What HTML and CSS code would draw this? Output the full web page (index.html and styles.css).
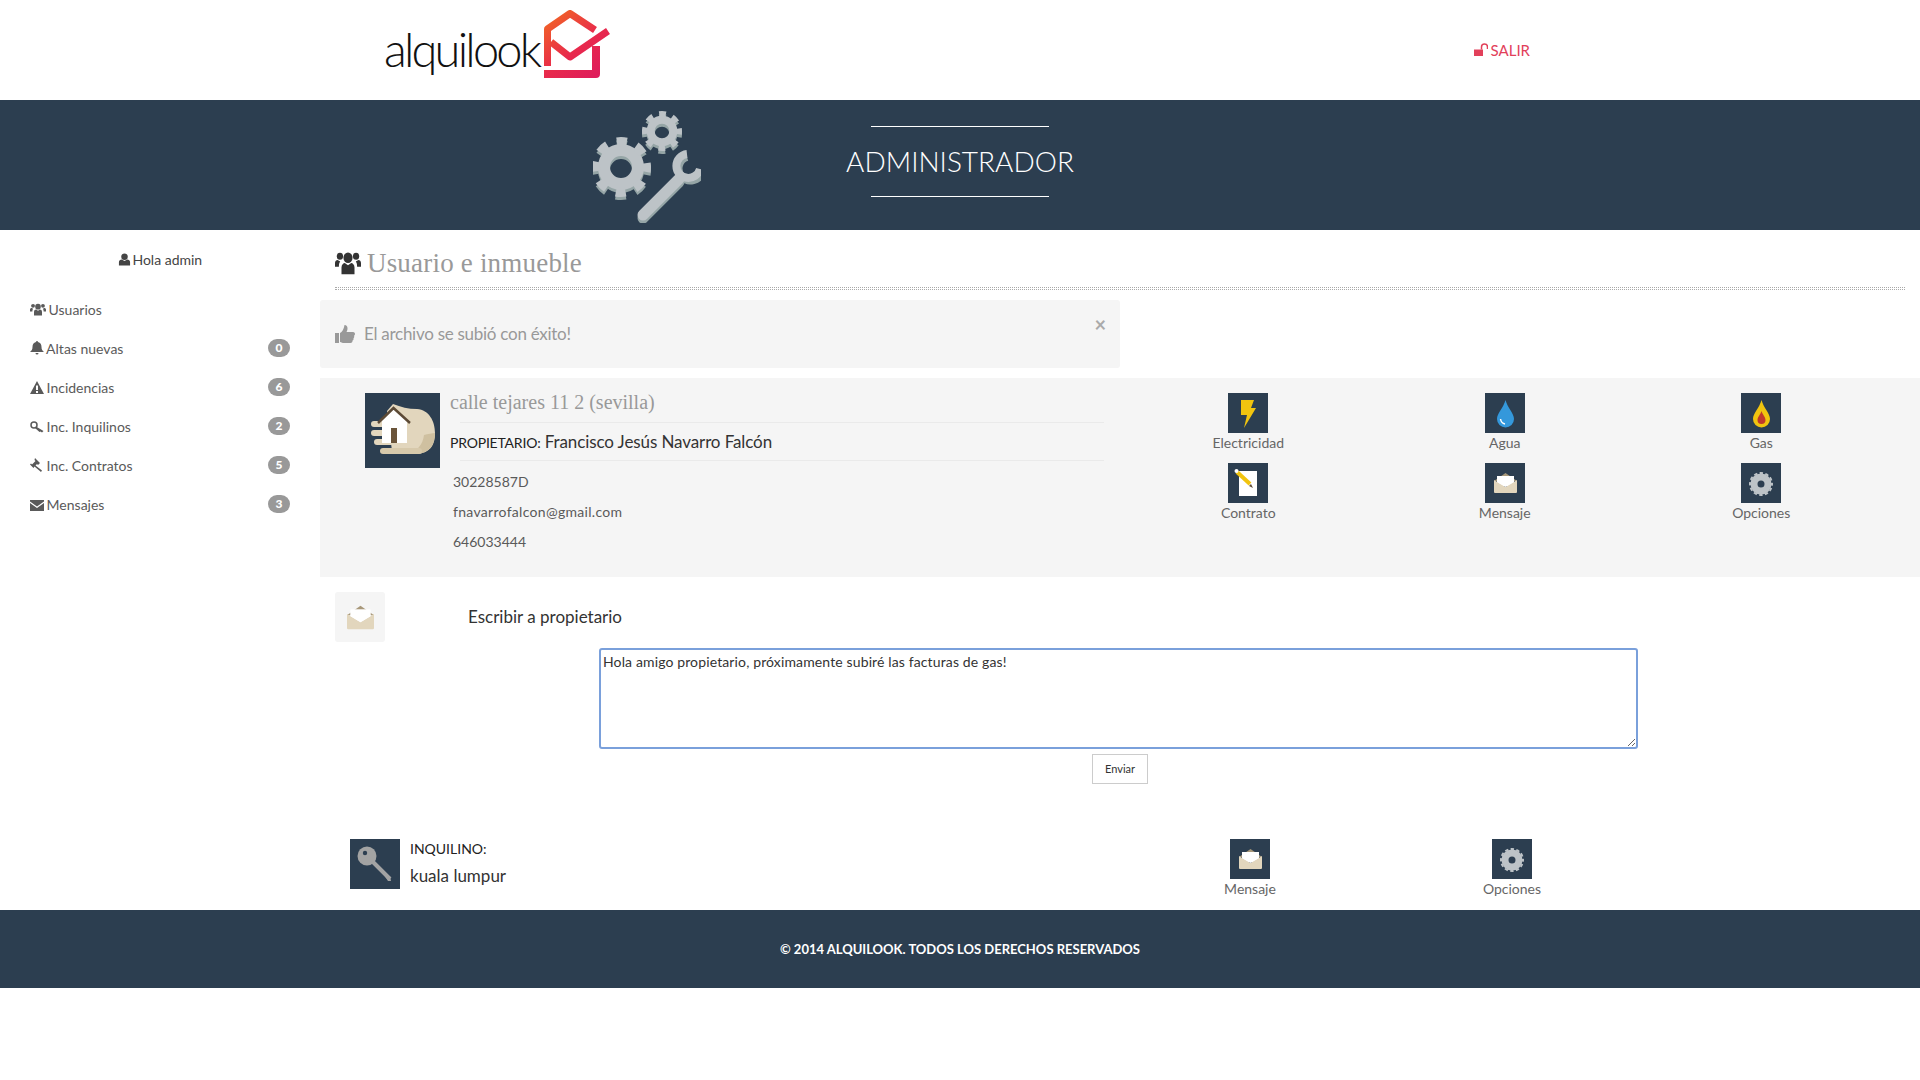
FILE: index.html
```html
<!DOCTYPE html>
<html lang="es">
<head>
<meta charset="UTF-8">
<meta name="viewport" content="width=device-width, initial-scale=1.0">
<title>Alquilook - Administrador</title>
<link rel="stylesheet" href="styles.css">
</head>
<body>

<!-- iconos compartidos -->
<svg class="sprite" width="0" height="0">
    <defs>
        <linearGradient id="logoGrad" gradientUnits="userSpaceOnUse" x1="4" y1="0" x2="60" y2="68">
            <stop offset="0" stop-color="#f26a21"/>
            <stop offset="0.55" stop-color="#e8294c"/>
            <stop offset="1" stop-color="#dd1a5e"/>
        </linearGradient>
        <symbol id="i-gear" viewBox="0 0 60 60">
            <circle cx="30" cy="30" r="17" fill="none" stroke="currentColor" stroke-width="12"/>
            <circle cx="30" cy="30" r="25.500" fill="none" stroke="currentColor" stroke-width="9" stroke-dasharray="10 10.030" stroke-dashoffset="5"/>
        </symbol>
        <symbol id="i-gear-small" viewBox="0 0 24 24">
            <circle cx="12" cy="12" r="7" fill="none" stroke="currentColor" stroke-width="7"/>
            <circle cx="12" cy="12" r="11" fill="none" stroke="currentColor" stroke-width="2" stroke-dasharray="3.400 2.360" stroke-dashoffset="1.700"/>
        </symbol>
        <symbol id="i-envelope" viewBox="0 0 23 20">
            <path fill="#a8987a" d="M11.500 0L23 8H0z"/>
            <path fill="#fff" d="M3 3h17v10H3z"/>
            <path fill="#e2d6bd" d="M0 7l11.500 7L23 7v12a1 1 0 0 1-1 1H1a1 1 0 0 1-1-1z"/>
            <path fill="#fff" d="M3 4h17v5l-8.500 5L3 9z"/>
        </symbol>
        <symbol id="i-user" viewBox="0 0 14 14">
            <circle cx="7" cy="4" r="3.500"/>
            <path d="M1 13.500V10c0-2 1.500-3 3-3l3 1.500L10 7c1.500 0 3 1 3 3v3.500z"/>
        </symbol>
        <symbol id="i-users" viewBox="0 0 20 16" preserveAspectRatio="none">
            <circle cx="10" cy="4.500" r="3.500"/>
            <circle cx="3.800" cy="3.500" r="2.400"/>
            <circle cx="16.200" cy="3.500" r="2.400"/>
            <path d="M5 15.500V11c0-2 1.500-3 2.500-3L10 9.500 12.500 8c1 0 2.500 1 2.500 3v4.500z"/>
            <path d="M0 10.500V8c0-1.300 1-2 2-2l2 1c-.7.800-1 1.500-1 3.500zM20 10.500V8c0-1.300-1-2-2-2l-2 1c.7.800 1 1.500 1 3.500z"/>
        </symbol>
    </defs>
</svg>

<header class="topbar">
    <a class="logo" href="#">
        <span class="logo-text">alquilook</span>
        <svg class="logo-mark" viewBox="0 0 66 70" width="66" height="70">
            <g fill="none" stroke="url(#logoGrad)" stroke-width="7" stroke-linejoin="round">
                <path d="M3.500 56V19L26 3.500 51 20"/>
                <path d="M7 32l19 15 38-26"/>
                <path d="M52 36v28H0" stroke-width="8"/>
            </g>
        </svg>
    </a>
    <a class="logout" href="#">
        <svg class="fa" viewBox="0 0 14 14" width="14" height="14"><path d="M0 6.500h9V13H0z"/><path d="M7.500 6.500V4a3 3 0 0 1 6 0v2" fill="none" stroke="currentColor" stroke-width="1.500"/></svg>
        SALIR
    </a>
</header>

<section class="band">
    <svg class="band-icon" viewBox="0 0 108 114" width="108" height="114">
        <g color="#95a5a6" transform="translate(0 3)">
            <use href="#i-gear" x="-2" y="28" width="60" height="60"/>
            <use href="#i-gear" x="49" y="2" width="40" height="40"/>
        </g>
        <g color="#bdc3c7">
            <use href="#i-gear" x="-2" y="28" width="60" height="60"/>
            <use href="#i-gear" x="49" y="2" width="40" height="40"/>
        </g>
        <g fill="none" stroke-linecap="round">
            <g stroke="#95a5a6" transform="translate(0 3)">
                <path d="M50 106L86 70" stroke-width="11"/>
                <path d="M94 45A12 12 0 1 0 109 60" stroke-width="8" stroke-linecap="butt"/>
            </g>
            <g stroke="#bdc3c7">
                <path d="M50 106L86 70" stroke-width="11"/>
                <path d="M94 45A12 12 0 1 0 107 60" stroke-width="8" stroke-linecap="butt"/>
            </g>
        </g>
    </svg>
    <h2 class="band-title"><span>ADMINISTRADOR</span></h2>
</section>

<div class="layout">
    <aside class="sidebar">
        <p class="hello"><svg class="fa" width="13" height="13"><use href="#i-user"/></svg> Hola admin</p>
        <ul class="side-menu">
            <li><a href="#"><svg class="fa" width="16" height="13"><use href="#i-users"/></svg> Usuarios</a></li>
            <li>
                <a href="#"><svg class="fa" viewBox="0 0 14 14" width="14" height="14"><path d="M7 0a1 1 0 0 1 1 1c2.500.500 3.500 2.500 3.500 5 0 2.500 1 3.500 2.500 5H0c1.500-1.500 2.500-2.500 2.500-5 0-2.500 1-4.500 3.500-5a1 1 0 0 1 1-1zM5.500 12h3a1.500 1.500 0 0 1-3 0z"/></svg> Altas nuevas</a>
                <span class="badge">0</span>
            </li>
            <li>
                <a href="#"><svg class="fa" viewBox="0 0 14 13" width="14" height="13"><path fill-rule="evenodd" d="M7 0l7 13H0zM6 4.500V9h2V4.500zM6 10v2h2v-2z"/></svg> Incidencias</a>
                <span class="badge">6</span>
            </li>
            <li>
                <a href="#"><svg class="fa" viewBox="0 0 14 12" width="14" height="12"><circle cx="4" cy="4" r="3" fill="none" stroke="currentColor" stroke-width="1.500"/><path d="M6 5.500L13.500 10 12 11.500 10.500 10.500 9.500 11 5 7z"/></svg> Inc. Inquilinos</a>
                <span class="badge">2</span>
            </li>
            <li>
                <a href="#"><svg class="fa" viewBox="0 0 14 14" width="14" height="14"><path d="M5 0l5 5-2 2-1-1-1.500 1.500 6.500 5-1 1.500-6.500-5.500L3.500 10l-1-1L0 6.500 1 5.500l1 1L5.500 3 4.500 2z"/></svg> Inc. Contratos</a>
                <span class="badge">5</span>
            </li>
            <li>
                <a href="#"><svg class="fa" viewBox="0 0 14 11" width="14" height="11"><path d="M0 0h14v1.500L7 6.500 0 1.500z"/><path d="M0 3l7 5 7-5v8H0z"/></svg> Mensajes</a>
                <span class="badge">3</span>
            </li>
        </ul>
    </aside>

    <main class="content">
        <h1 class="page-title"><svg class="fa" width="26" height="24"><use href="#i-users"/></svg> Usuario e inmueble</h1>
        <div class="dots"></div>

        <div class="alert">
            <svg class="fa" viewBox="0 0 20 20" width="20" height="20"><path d="M0 9h4v10H0z"/><path d="M5 9c2-1 4-4 4.500-8 2 0 3 1.500 3 3.500 0 1.500-.5 2.500-1 3.500H18c1.500 0 2 1 2 2 0 .800-.5 1.500-1 1.800.500 1 .200 2-.500 2.500.300 1-.200 2-1 2.300.200 1.400-.700 2.400-2 2.400H9c-1.500 0-2.500-.500-4-1z"/></svg>
            <span class="alert-text">El archivo se subió con éxito!</span>
            <button class="close">×</button>
        </div>

        <section class="panel">
            <div class="owner">
                <svg class="owner-pic" viewBox="0 0 75 75" width="75" height="75">
                    <rect width="75" height="75" fill="#2c3e50"/>
                    <path fill="#e2d6bd" d="M28 11c8 3 15 5 24 5 12 1 18 12 18 24s-5 20-18 21l-25-3-5-40z"/>
                    <path fill="#cfc0a0" d="M70 40c0 12-5 20-18 21H40c12-1 18-10 19-19 4-1 8-2 11-2z"/>
                    <rect x="6" y="28" width="24" height="6" rx="3" fill="#e2d6bd"/>
                    <rect x="6" y="37" width="24" height="6" rx="3" fill="#e2d6bd"/>
                    <rect x="9" y="46" width="24" height="6" rx="3" fill="#e2d6bd"/>
                    <rect x="15" y="55" width="42" height="6" rx="3" fill="#d7c9ab"/>
                    <path fill="#fff" d="M17 27L29 15l13 12v23H17z"/>
                    <path fill="none" stroke="#5c4a36" stroke-width="2.500" d="M13 30L28.500 15 45 30"/>
                    <rect x="26" y="35" width="6" height="15" fill="#6a543a"/>
                </svg>
                <div class="owner-info">
                    <h3 class="address">calle tejares 11 2 (sevilla)</h3>
                    <hr>
                    <p class="owner-name"><span>PROPIETARIO:</span> Francisco Jesús Navarro Falcón</p>
                    <hr>
                    <ul class="owner-data">
                        <li>30228587D</li>
                        <li class="owner-mail">fnavarrofalcon@gmail.com</li>
                        <li>646033444</li>
                    </ul>
                </div>
            </div>
            <div class="tiles">
                <a class="tile" href="#">
                    <svg viewBox="0 0 40 40" width="40" height="40"><rect width="40" height="40" fill="#2c3e50"/><path fill="#f1c40f" d="M13 7h13l-3 8h5L16 35l3-13h-6z"/></svg>
                    Electricidad
                </a>
                <a class="tile" href="#">
                    <svg viewBox="0 0 40 40" width="40" height="40"><rect width="40" height="40" fill="#2c3e50"/><path fill="#3498db" d="M20.500 7c2 8 8.500 13 8.500 19a8.500 8.500 0 0 1-17 0c0-6 6.500-11 8.500-19z"/><path fill="none" stroke="#fff" stroke-width="1.500" d="M15.500 26c.5 3 2 4.500 4.500 5"/></svg>
                    Agua
                </a>
                <a class="tile" href="#">
                    <svg viewBox="0 0 40 40" width="40" height="40"><rect width="40" height="40" fill="#2c3e50"/><path fill="#f1c40f" d="M20.500 7c2 8 8.500 13 8.500 19a8.500 8.500 0 0 1-17 0c0-6 6.500-11 8.500-19z"/><path fill="#c0392b" d="M20.500 18c1 3.500 4 6 4 9a4 4 0 0 1-8 0c0-3 3-5.500 4-9z"/></svg>
                    Gas
                </a>
                <a class="tile" href="#">
                    <svg viewBox="0 0 40 40" width="40" height="40"><rect width="40" height="40" fill="#2c3e50"/><path fill="#fff" d="M11 8h18v25H11z"/><path stroke="#f1c40f" stroke-width="4" d="M9 9l13 12"/><path fill="#5c4a36" d="M21 23l4 2-2-4z"/><circle cx="8.500" cy="8" r="2" fill="#fff"/></svg>
                    Contrato
                </a>
                <a class="tile" href="#">
                    <svg viewBox="0 0 40 40" width="40" height="40"><rect width="40" height="40" fill="#2c3e50"/><use href="#i-envelope" x="9" y="10" width="23" height="20"/></svg>
                    Mensaje
                </a>
                <a class="tile" href="#">
                    <svg viewBox="0 0 40 40" width="40" height="40" color="#bdc3c7"><rect width="40" height="40" fill="#2c3e50"/><use href="#i-gear-small" x="8" y="9" width="24" height="24"/></svg>
                    Opciones
                </a>
            </div>
        </section>

        <section class="message">
            <div class="message-head">
                <span class="message-icon"><svg width="27" height="25"><use href="#i-envelope"/></svg></span>
                <span class="message-title">Escribir a propietario</span>
            </div>
            <textarea class="message-box">Hola amigo propietario, próximamente subiré las facturas de gas!</textarea>
            <div class="message-send"><button class="btn">Enviar</button></div>
        </section>

        <section class="tenant">
            <div class="tenant-info">
                <svg viewBox="0 0 50 50" width="50" height="50"><rect width="50" height="50" fill="#2c3e50"/><path fill="none" stroke="#a3a3a3" stroke-width="4" d="M20 20l20 20"/><path fill="#a3a3a3" d="M34 36l3-1 1 3 2-1 1 5-3 0z"/><circle cx="17" cy="17" r="9.500" fill="#a3a3a3"/><circle cx="15" cy="14" r="2.200" fill="#2c3e50"/></svg>
                <div>
                    <p class="tenant-label">INQUILINO:</p>
                    <p class="tenant-name">kuala lumpur</p>
                </div>
            </div>
            <a class="tile" href="#">
                <svg viewBox="0 0 40 40" width="40" height="40"><rect width="40" height="40" fill="#2c3e50"/><use href="#i-envelope" x="9" y="10" width="23" height="20"/></svg>
                Mensaje
            </a>
            <a class="tile" href="#">
                <svg viewBox="0 0 40 40" width="40" height="40" color="#bdc3c7"><rect width="40" height="40" fill="#2c3e50"/><use href="#i-gear-small" x="8" y="9" width="24" height="24"/></svg>
                Opciones
            </a>
        </section>
    </main>
</div>

<footer class="footer">© 2014 ALQUILOOK. TODOS LOS DERECHOS RESERVADOS</footer>

</body>
</html>
```

FILE: styles.css
```css
body {
  font-family: 'Lato', sans-serif;
  font-size: 14px;
  margin: 0;
  background-color: #fff;
  color: #5a5a5a;
}
a {
  color: inherit;
  text-decoration: none;
}
ul {
  list-style: none;
  margin: 0;
  padding: 0;
}
p, h1, h2, h3 {
  margin: 0;
  font-weight: normal;
}
.sprite {
  display: block;
  height: 0;
}
.fa {
  fill: currentColor;
  vertical-align: -1px;
  margin-right: -1px;
}

/* cabecera */
.topbar {
  display: flex;
  align-items: flex-start;
  justify-content: space-between;
  height: 100px;
  padding: 0 390px 0 384px;
}
.logo {
  display: flex;
  align-items: flex-start;
  color: #111;
  padding-top: 10px;
}
.logo-text {
  font-size: 47px;
  font-weight: 300;
  line-height: 78px;
  letter-spacing: -2.800px;
  width: 160px;
}
.logo-mark {
  display: block;
}
.logout {
  margin-top: 41px;
  color: #e2405a;
  font-size: 15px;
  line-height: 18px;
}
.band {
  display: grid;
  grid-template-columns: 1fr auto 1fr;
  align-items: center;
  height: 130px;
  background-color: #2c3e50;
  color: #fff;
}
.band-icon {
  justify-self: end;
  margin: 2px 145px 0 0;
}
.band-title {
  margin-bottom: 8px;
  font-size: 28px;
  font-weight: 300;
  line-height: 34px;
  text-align: center;
}
.band-title span {
  display: block;
  position: relative;
  padding: 18px 0 19px;
}
.band-title span::before,
.band-title span::after {
  content: '';
  position: absolute;
  left: 25px;
  right: 25px;
  height: 1px;
  background-color: #fff;
}
.band-title span::before { top: 0; }
.band-title span::after { bottom: 0; }

/* columnas */
.layout {
  display: grid;
  grid-template-columns: 320px 1fr;
  height: 680px;
}
.sidebar {
  padding-top: 20px;
}
.hello {
  line-height: 20px;
  text-align: center;
  color: #444;
  margin-bottom: 20px;
}
.hello .fa {
  margin-right: -2px;
}
.side-menu li {
  display: flex;
  align-items: center;
  justify-content: space-between;
  height: 39px;
  padding: 0 30px;
}
.badge {
  width: 22px;
  height: 18px;
  line-height: 18px;
  margin-top: -2px;
  border-radius: 9px;
  background-color: #999;
  color: #fff;
  font-size: 12px;
  font-weight: 900;
  text-align: center;
}

/* contenido */
.page-title {
  padding: 16px 15px 0;
  height: 41px;
  font-family: 'Liberation Serif', serif;
  font-size: 27px;
  line-height: 34px;
  letter-spacing: 0.200px;
  color: #999;
}
.page-title .fa {
  color: #333;
  vertical-align: -3px;
}
.dots {
  height: 1px;
  margin: 0 15px;
  border-top: 1px dotted #aaa;
  border-bottom: 1px dotted #aaa;
}
.alert {
  display: flex;
  align-items: center;
  gap: 10px;
  width: 800px;
  height: 68px;
  box-sizing: border-box;
  margin-top: 10px;
  padding: 0 15px;
  border-radius: 3px;
  background-color: #f5f5f5;
  color: #999;
  font-size: 17px;
  letter-spacing: -0.270px;
}
.alert-text {
  margin-top: -2px;
}
.close {
  align-self: flex-start;
  margin: 13px -1px 0 auto;
  padding: 0;
  border: none;
  background: none;
  color: #aaa;
  font-family: 'Lato', sans-serif;
  font-size: 20px;
  font-weight: 700;
  line-height: 22px;
}
.panel {
  display: flex;
  height: 199px;
  margin-top: 10px;
  background-color: #f5f5f5;
}
.owner {
  display: flex;
  box-sizing: border-box;
  width: 800px;
  padding: 15px 16px 0 45px;
}
.owner-pic {
  flex: none;
}
.owner-info {
  flex: 1;
  margin-left: 10px;
}
.owner-info hr {
  height: 1px;
  margin: 0 0 0 10px;
  border: none;
  background-color: #eaeaea;
}
.address {
  height: 29px;
  font-family: 'Liberation Serif', serif;
  font-size: 20px;
  line-height: 18px;
  color: #999;
}
.owner-name {
  height: 37px;
  line-height: 37px;
  font-size: 17px;
  letter-spacing: -0.100px;
  color: #333;
}
.owner-name span {
  font-size: 14px;
  letter-spacing: -0.200px;
  color: #222;
}
.owner-data {
  margin: 6px 0 0 3px;
}
.owner-data li {
  height: 30px;
  line-height: 30px;
}
.owner-data .owner-mail {
  letter-spacing: 0.300px;
}
.tiles {
  display: grid;
  grid-template-columns: repeat(3, 256.500px);
  grid-auto-rows: 60px;
  row-gap: 10px;
  padding-top: 15px;
}
.tile {
  display: flex;
  flex-direction: column;
  align-items: center;
  color: #666;
  line-height: 20px;
}
.tile svg {
  display: block;
}
.message-head {
  display: flex;
  align-items: center;
  gap: 83px;
  margin: 15px 0 0 15px;
}
.message-icon {
  display: flex;
  align-items: center;
  justify-content: center;
  width: 50px;
  height: 50px;
  border-radius: 3px;
  background-color: #f5f5f5;
}
.message-title {
  margin-top: -2px;
  font-size: 17px;
  color: #333;
}
.message-box {
  display: block;
  box-sizing: border-box;
  width: 1039px;
  height: 101px;
  margin: 6px 0 0 279px;
  padding: 2px;
  border: 2px solid #7aa0db;
  border-radius: 3px;
  outline: none;
  font-family: 'Lato', sans-serif;
  font-size: 14px;
  line-height: 20px;
  letter-spacing: 0.130px;
  color: #333;
}
.message-send {
  margin-top: 5px;
  text-align: center;
}
.btn {
  width: 56px;
  height: 30px;
  padding: 0 0 2px;
  border: 1px solid #ccc;
  background-color: #fff;
  color: #333;
  font-family: 'Lato', sans-serif;
  font-size: 11px;
}
.tenant {
  display: grid;
  grid-template-columns: 799px 262px 262px;
  margin-top: 55px;
}
.tenant-info {
  display: flex;
  gap: 10px;
  padding-left: 30px;
}
.tenant-label {
  line-height: 20px;
  color: #222;
}
.tenant-name {
  margin-top: 6px;
  font-size: 17px;
  line-height: 22px;
  color: #333;
}
.footer {
  height: 78px;
  line-height: 78px;
  background-color: #2c3e50;
  color: #fff;
  font-weight: 700;
  font-size: 13px;
  text-align: center;
}
```
